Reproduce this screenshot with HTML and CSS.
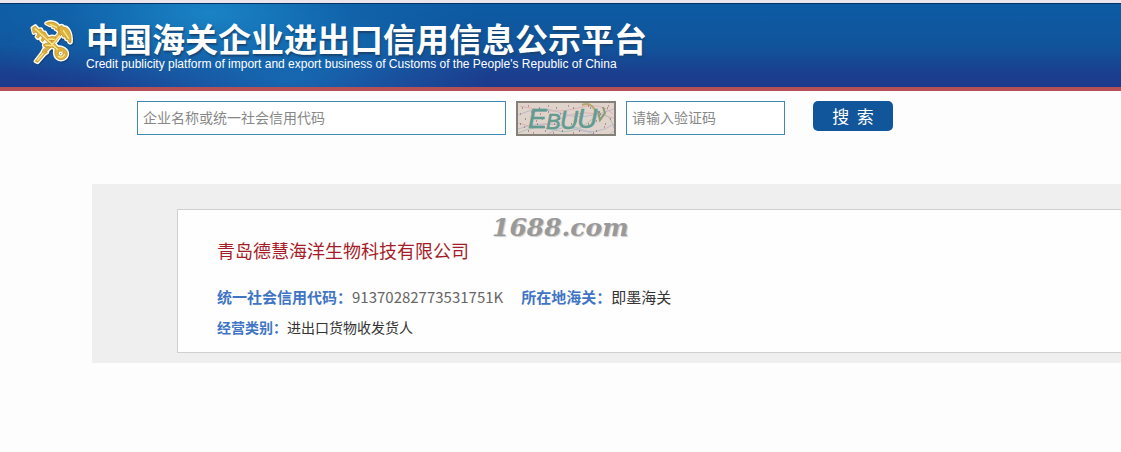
FILE: index.html
```html
<!DOCTYPE html>
<html lang="zh-CN">
<head>
<meta charset="utf-8">
<title>中国海关企业进出口信用信息公示平台</title>
<link rel="stylesheet" href="styles.css">
</head>
<body>
<header class="site-header">
  <svg class="emblem" viewBox="0 0 150 150" aria-hidden="true">
    <defs>
      <g id="keys" stroke-linecap="round" stroke-linejoin="round">
        <path d="M13 27L22 21L31 31L39 30L44 39L51 40L56 49L91 86L84 93L50 61L44 68L39 63L43 56L37 50L30 58L25 53L30 45L24 39L17 42Z"/>
        <path fill-rule="evenodd" d="M84 88C94 80 116 88 118 102C119 116 105 126 91 120C80 114 77 97 84 88ZM94 97C88 102 92 111 99 111C107 109 107 99 102 97Z"/>
        <path d="M92 43L99 48L74 80L66 75ZM63 76L70 83L57 97L50 91ZM47 91L58 100L50 106L29 130L22 127L42 101Z"/>
        <path d="M54 13C67 5 86 9 94 24L94 41C89 36 87 31 82 31L82 26L74 25L73 20L65 19Z"/>
        <path d="M94 24C98 18 104 19 106 25C118 22 132 40 129 70C126 75 121 68 121 62L114 61L113 54L106 54L102 47L93 43Z"/>
        <path d="M61 57C69 49 86 52 87 61C88 67 83 68 77 65L67 64C60 65 57 61 61 57ZM48 76C56 68 79 75 77 84C75 88 66 82 56 84C47 85 45 80 48 76Z"/>
      </g>
    </defs>
    <use href="#keys" class="emblem-shadow" x="3" y="4"/>
    <use href="#keys" class="emblem-outline"/>
    <use href="#keys" class="emblem-gold"/>
    <path class="emblem-shine" d="M22 29L88 91M67 17L86 25M106 35L122 58M94 51L72 78M45 104L29 123M91 112Q102 119 109 107M62 60L78 61M54 79L69 80"/>
  </svg>
  <div class="brand">
    <h1 class="brand-title">中国海关企业进出口信用信息公示平台</h1>
    <p class="brand-subtitle">Credit publicity platform of import and export business of Customs of the People's Republic of China</p>
  </div>
</header>
<main>
  <form class="search">
    <input class="field field-name" type="text" aria-label="企业名称或统一社会信用代码" placeholder="企业名称或统一社会信用代码">
    <svg class="captcha" viewBox="0 0 100 35" role="img" aria-label="验证码">
      <rect width="100" height="35" fill="#e0d3cc"/>
      <g fill="none" stroke-width="1">
        <path stroke="#b9bac9" d="M2 14Q25 3 45 12T98 8M2 28Q30 18 55 27T98 23M30 34Q50 20 70 30T98 30"/>
        <path stroke="#dbb4b4" d="M2 22Q22 30 44 18T98 17M4 5Q40 14 62 7T97 13"/>
        <path stroke="#adc3b8" d="M2 32Q20 23 38 29T74 20T98 27"/>
        <path stroke="#b6a76d" stroke-width="2" d="M66 4Q75 0 80 11"/>
        <path stroke="#8c9b74" stroke-width="2" d="M82 10L84 19L89 12L87 6"/>
        <path stroke="#59545f" stroke-dasharray="1 16" d="M6 7H97M15 11H97M9 18H97M4 23H97M12 30H97"/>
        <path stroke="#a84b5c" stroke-dasharray="1 19" d="M12 5H97M4 13H97M20 20H97M8 26H97M17 32H97"/>
      </g>
      <g class="captcha-text">
        <text x="12" y="27" font-size="28">E</text>
        <text x="30" y="28" font-size="22">B</text>
        <text x="44" y="28" font-size="25">U</text>
        <text x="61" y="27" font-size="28">U</text>
      </g>
      <rect x="1" y="1" width="98" height="33" fill="none" stroke="#858078" stroke-width="2"/>
    </svg>
    <input class="field field-code" type="text" aria-label="请输入验证码" placeholder="请输入验证码">
    <button class="search-button" type="submit">搜&nbsp; 索</button>
  </form>
  <section class="results">
    <article class="card">
      <h2 class="company">青岛德慧海洋生物科技有限公司</h2>
      <dl class="facts">
        <div class="fact"><dt>统一社会信用代码：</dt><dd class="code">91370282773531751K</dd></div>
        <div class="fact"><dt>所在地海关：</dt><dd>即墨海关</dd></div>
      </dl>
      <dl class="facts facts-small">
        <div class="fact"><dt>经营类别：</dt><dd>进出口货物收发货人</dd></div>
      </dl>
      <span class="watermark">1688.com</span>
    </article>
  </section>
</main>
</body>
</html>
```
FILE: styles.css
```css
* {
  box-sizing: border-box;
}

body {
  margin: 0;
  background: #fdfdfd;
  color: #333;
  font-family: "Noto Sans CJK SC", sans-serif;
}

h1, h2, p, dl, dd {
  margin: 0;
}

.site-header {
  display: flex;
  align-items: flex-start;
  gap: 8px;
  height: 91px;
  padding: 16px 28px 0;
  border-top: 3px solid #ebe6ed;
  border-bottom: 4px solid #b45056;
  background:
    linear-gradient(#063366, #063366) top / 100% 1px no-repeat,
    radial-gradient(ellipse 260px 90px at 210px 10px, rgba(28, 139, 203, 0.85), rgba(20, 110, 180, 0.4) 55%, transparent),
    radial-gradient(ellipse 200px 70px at 290px 75px, rgba(20, 125, 195, 0.65), transparent),
    linear-gradient(#0d5ba4, #10559c 50%, #1b3e8e 85%, #1c3a8d);
}

.emblem {
  flex: none;
  width: 50px;
  height: 50px;
}

.emblem-shadow {
  fill: #15427d;
  stroke: #15427d;
  stroke-width: 11px;
}

.emblem-outline {
  fill: #fffdf0;
  stroke: #fffdf0;
  stroke-width: 11px;
}

.emblem-gold {
  fill: #dfb23c;
  stroke: #b98a25;
  stroke-width: 2px;
}

.emblem-shine {
  fill: none;
  stroke: #fae98f;
  stroke-width: 4px;
  stroke-linecap: round;
}

.brand {
  color: #fff;
  white-space: nowrap;
}

.brand-title {
  font-size: 33px;
  font-weight: 700;
  line-height: 38px;
  text-shadow: 1px 2px 2px #174573;
}

.brand-subtitle {
  font-family: "Liberation Sans", Arial, sans-serif;
  font-size: 12px;
  line-height: 14px;
}

.search {
  display: flex;
  align-items: flex-start;
  gap: 10px;
  padding: 10px 20px 48px 137px;
}

.field {
  height: 34px;
  padding: 0 5px 2px;
  border: 1px solid #4189b3;
  border-radius: 0;
  background: #fff;
  font-family: inherit;
  font-size: 14px;
}

.field::placeholder {
  color: #888;
  opacity: 1;
}

.field-name {
  width: 369px;
}

.field-code {
  width: 159px;
}

.captcha {
  flex: none;
  width: 100px;
  height: 35px;
}

.captcha-text {
  fill: #629b91;
  stroke: #629b91;
  stroke-width: 0.5px;
  font-family: "Liberation Sans", Arial, sans-serif;
  font-style: italic;
}

.search-button {
  width: 80px;
  height: 30px;
  margin-left: 18px;
  padding: 0;
  border: 0;
  border-radius: 5px;
  background: #11559b;
  color: #fff;
  font-family: inherit;
  font-size: 17px;
  line-height: 30px;
}

.results {
  margin-left: 92px;
  padding: 25px 0 10px 85px;
  background: #efefef;
}

.card {
  position: relative;
  padding: 25px 0 10px 39px;
  border: 1px solid #d0d0d0;
  border-right: 0;
  background: #fefefe;
}

.company {
  margin-bottom: 17px;
  color: #a51c29;
  font-size: 18px;
  font-weight: 400;
  line-height: 30px;
}

.facts {
  display: flex;
  gap: 18px;
  font-size: 15px;
  line-height: 30px;
}

.facts-small {
  font-size: 14px;
}

.fact {
  display: flex;
}

.fact dt {
  color: #3f75c4;
  font-weight: 700;
}

.fact .code {
  color: #666;
}

.watermark {
  position: absolute;
  top: 4px;
  left: 314px;
  color: #999;
  font-family: "DejaVu Serif", serif;
  font-size: 25px;
  font-style: italic;
  font-weight: 700;
  line-height: 28px;
  text-shadow: 1px 1px 1px #ccc;
}
```
